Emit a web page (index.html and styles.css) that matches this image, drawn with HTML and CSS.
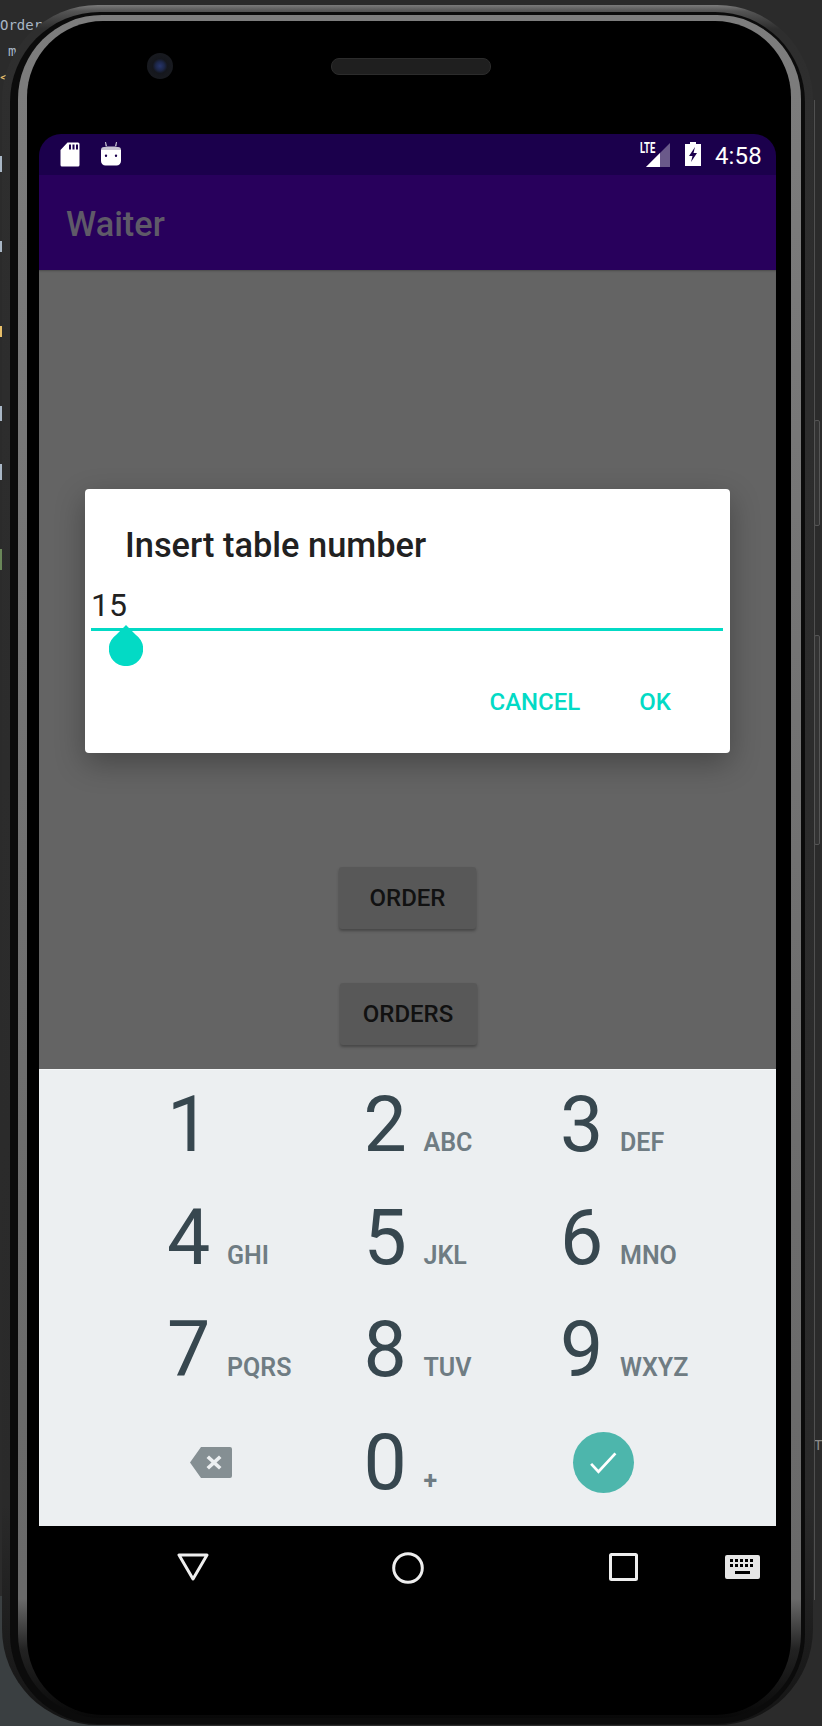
FILE: index.html
```html
<!DOCTYPE html>
<html lang="en">
<head>
    <meta charset="UTF-8">
    <meta name="viewport" content="width=device-width, initial-scale=1.0">
    <title>Waiter</title>
    <link rel="stylesheet" href="styles.css">
</head>
<body>
    <!-- bits of the IDE showing behind the emulator -->
    <div class="ide">
        <span class="code code-1">Order</span>
        <span class="code code-2">m</span>
        <span class="code code-3">&lt;</span>
        <span class="code code-4">T</span>
        <div class="gutter"></div>
        <div class="edge"></div>
        <div class="volume volume-1"></div>
        <div class="volume volume-2"></div>
    </div>

    <div class="phone">
        <div class="bezel">
            <div class="rim">
                <div class="face">
                    <div class="sensors">
                        <div class="camera"></div>
                        <div class="speaker"></div>
                    </div>

                    <div class="screen">
                        <div class="status-bar">
                            <svg class="icon-sd" viewBox="0 0 20 25"><path fill="#fff" fill-rule="evenodd" d="M7.500.5H18a1.500 1.500 0 0 1 1.500 1.500v21a1.500 1.500 0 0 1-1.500 1.500H2A1.500 1.500 0 0 1 .5 23V8zM9 2.500v5h2v-5zm3.500 0v5h2v-5zm3.500 0v5h2v-5z"/></svg>
                            <svg class="icon-android" viewBox="0 0 20 24"><path fill="#c9c5d2" d="M4 0h1l1 4h8l1-4h1l-.6 4.500H4.600z"/><path fill="#c9c5d2" d="M3 5h14a3 3 0 0 1 3 3H0a3 3 0 0 1 3-3z"/><path fill="#fff" fill-rule="evenodd" d="M0 8h20v11a4.500 4.500 0 0 1-4.500 4.500h-11A4.500 4.500 0 0 1 0 19zm5 4.500a1.200 1.200 0 1 0 0 2.400 1.200 1.200 0 0 0 0-2.400zm10 0a1.200 1.200 0 1 0 0 2.400 1.200 1.200 0 0 0 0-2.400z"/></svg>
                            <div class="status-right">
                                <div class="signal">
                                    <span class="lte">LTE</span>
                                    <svg class="icon-signal" viewBox="0 0 24 24"><path fill="#fff" fill-opacity=".35" d="M24 0v24H0z"/><path fill="#fff" d="M14 10v14H0z"/></svg>
                                </div>
                                <svg class="icon-battery" viewBox="0 0 16 24"><path fill="#fff" fill-rule="evenodd" d="M5 0h6v2h5v22H0V2h5zm5 5L4 14h3.500L6 20l6-9H8.500z"/></svg>
                                <span class="clock">4:58</span>
                            </div>
                        </div>

                        <div class="app-bar">Waiter</div>

                        <div class="content">
                            <button class="btn btn-order">ORDER</button>
                            <button class="btn btn-orders">ORDERS</button>

                            <div class="dialog">
                                <div class="dialog-title">Insert table number</div>
                                <div class="dialog-input">15</div>
                                <div class="dialog-line"></div>
                                <div class="handle"></div>
                                <div class="dialog-actions">
                                    <span class="action">CANCEL</span>
                                    <span class="action">OK</span>
                                </div>
                            </div>
                        </div>

                        <div class="keypad">
                            <div class="key"><span class="digit">1</span></div>
                            <div class="key"><span class="digit">2</span><span class="letters">ABC</span></div>
                            <div class="key"><span class="digit">3</span><span class="letters">DEF</span></div>
                            <div class="key"><span class="digit">4</span><span class="letters">GHI</span></div>
                            <div class="key"><span class="digit">5</span><span class="letters">JKL</span></div>
                            <div class="key"><span class="digit">6</span><span class="letters">MNO</span></div>
                            <div class="key"><span class="digit">7</span><span class="letters">PQRS</span></div>
                            <div class="key"><span class="digit">8</span><span class="letters">TUV</span></div>
                            <div class="key"><span class="digit">9</span><span class="letters">WXYZ</span></div>
                            <div class="key key-icon">
                                <svg class="icon-backspace" viewBox="0 0 42 31"><path fill="#858f93" fill-rule="evenodd" d="M11 0h29a2 2 0 0 1 2 2v27a2 2 0 0 1-2 2H11L0 15.500zm8 8.500 -2.500 2.500 5 4.500 -5 4.500 2.500 2.500 5-4.500 5 4.500 2.500-2.500 -5-4.500 5-4.500 -2.500-2.500 -5 4.500z"/></svg>
                            </div>
                            <div class="key"><span class="digit">0</span><span class="letters plus">+</span></div>
                            <div class="key key-icon">
                                <div class="done">
                                    <svg class="icon-check" viewBox="0 0 30 24"><path fill="none" stroke="#fff" stroke-width="3" d="M1.500 13l8 8.500 L28 1.500"/></svg>
                                </div>
                            </div>
                        </div>

                        <div class="nav-bar">
                            <svg class="icon-back" viewBox="0 0 32 28"><path fill="none" stroke="#eee" stroke-width="3" stroke-linejoin="round" d="M2 2h28L16 26z"/></svg>
                            <svg class="icon-home" viewBox="0 0 32 32"><circle cx="16" cy="16" r="14.300" fill="none" stroke="#eee" stroke-width="3"/></svg>
                            <svg class="icon-recent" viewBox="0 0 29 28"><rect x="1.500" y="1.500" width="26" height="25" rx="1" fill="none" stroke="#eee" stroke-width="3"/></svg>
                            <svg class="icon-keyboard" viewBox="0 0 35 24"><path fill="#e6e6e6" fill-rule="evenodd" d="M2 0h31a2 2 0 0 1 2 2v20a2 2 0 0 1-2 2H2a2 2 0 0 1-2-2V2a2 2 0 0 1 2-2zm3 4v3h3V4zm5 0v3h3V4zm5 0v3h3V4zm5 0v3h3V4zm5 0v3h3V4zM5 9v3h3V9zm5 0v3h3V9zm5 0v3h3V9zm5 0v3h3V9zm5 0v3h3V9zM10 16v3h15v-3z"/></svg>
                        </div>
                    </div>
                </div>
            </div>
        </div>
    </div>
</body>
</html>
```

FILE: styles.css
```css
* {
    box-sizing: border-box;
}
html, body {
    margin: 0;
    padding: 0;
    height: 1726px;
    overflow: hidden;
}
body {
    position: relative;
    background: #2b2b2b;
    font-family: Roboto, "Liberation Sans", sans-serif;
}

/* IDE text behind the device */
.ide {
    position: absolute;
    inset: 0;
    background: linear-gradient(#3a3f41, #3a3f41) left bottom / 130px 130px no-repeat;
}
.code {
    position: absolute;
    font-family: "DejaVu Sans Mono", monospace;
    font-size: 14px;
    line-height: 16px;
    color: #a9b7c6;
}
.code-1 { left: 0; top: 17px; }
.code-2 { left: 8px; top: 43px; }
.code-3 { left: 0; top: 69px; color: #e8bf6a; }
.code-4 { left: 814px; top: 1437px; color: #8a8a8a; }
.gutter {
    position: absolute;
    left: 0;
    top: 130px;
    width: 2px;
    height: 530px;
    background: linear-gradient(#2b2b2b 0 5%, #a9b7c6 5% 8%, #2b2b2b 8% 21%, #a9b7c6 21% 23%, #2b2b2b 23% 37%, #e8bf6a 37% 39%, #2b2b2b 39% 52%, #a9b7c6 52% 55%, #2b2b2b 55% 63%, #a9b7c6 63% 66%, #2b2b2b 66% 79%, #6a8759 79% 83%, #2b2b2b 83% 100%);
}
.edge {
    position: absolute;
    left: 814px;
    top: 100px;
    width: 1px;
    height: 1500px;
    background: #505050;
}
.volume {
    position: absolute;
    left: 814px;
    width: 6px;
    border: 1px solid #555;
    border-radius: 2px;
    background: #333;
}
.volume-1 { top: 420px; height: 106px; }
.volume-2 { top: 635px; height: 210px; }

/* device body */
.phone {
    position: relative;
    width: 811px;
    height: 1720px;
    margin: 5px 0 0 2px;
    padding: 7px 8px 0;
    border-radius: 96px;
    background: linear-gradient(#7b7b7b 0, #555 6px, #2e2e2e 24px, #2a2a2a 1500px, #141414 100%);
}
.bezel {
    height: 1712px;
    padding: 3px 4px 0 8px;
    border-radius: 90px;
    background: #0b0b0b;
}
.rim {
    height: 1703px;
    padding: 6px 10px 0 9px;
    border-radius: 84px;
    background: linear-gradient(#7d7d7d 0, #6c6c6c 70%, #6a6a6a 93%, #222 96%, #080808 100%);
}
.face {
    height: 1694px;
    padding: 0 0 0 12px;
    border-radius: 76px;
    background: #000;
}
.sensors {
    display: flex;
    align-items: center;
    height: 113px;
    padding: 32px 0 55px 108px;
}
.camera {
    width: 26px;
    height: 26px;
    border-radius: 50%;
    background: radial-gradient(circle, #27356b 0, #1c2648 24%, #15171d 40%, #1b1d22 100%);
}
.speaker {
    width: 160px;
    height: 17px;
    margin-left: 158px;
    border: 1px solid #2c2c2c;
    border-radius: 8px;
    background: #1f1f1f;
}

/* screen */
.screen {
    display: flex;
    flex-direction: column;
    width: 737px;
    height: 1474px;
    border-radius: 22px 22px 14px 14px;
    overflow: hidden;
    background: #000;
}
.status-bar {
    display: flex;
    align-items: flex-start;
    flex: none;
    height: 41px;
    padding: 8px 14px 0 21px;
    background: #1b004c;
}
.icon-sd {
    width: 20px;
    height: 25px;
}
.icon-android {
    width: 20px;
    height: 24px;
    margin-left: 21px;
}
.status-right {
    display: flex;
    align-items: flex-start;
    margin-left: auto;
}
.signal {
    position: relative;
    width: 30px;
    height: 25px;
}
.lte {
    position: absolute;
    left: 0;
    top: 0;
    font-size: 14px;
    line-height: 12px;
    font-weight: 700;
    color: #fff;
    transform: scaleX(.68);
    transform-origin: left;
}
.icon-signal {
    position: absolute;
    left: 6px;
    top: 1px;
    width: 24px;
    height: 24px;
}
.icon-battery {
    width: 16px;
    height: 24px;
    margin-left: 15px;
}
.clock {
    margin-left: 14px;
    font-size: 24px;
    line-height: 28px;
    color: #fff;
    letter-spacing: .2px;
}
.app-bar {
    flex: none;
    height: 95px;
    padding: 29px 0 0 27px;
    background: #28005c;
    font-size: 34.300px;
    line-height: 40px;
    font-weight: 500;
    color: #5f5a68;
}
.content {
    position: relative;
    flex: none;
    height: 799px;
    display: flex;
    flex-direction: column;
    align-items: center;
    background: #646464;
    box-shadow: inset 0 2px 2px -1px rgba(0, 0, 0, .25);
}
.btn {
    width: 137px;
    height: 62px;
    padding: 0;
    border: none;
    border-radius: 3px;
    background: #585858;
    box-shadow: 0 2px 3px rgba(0, 0, 0, .3);
    font-family: inherit;
    font-size: 24px;
    font-weight: 500;
    color: #111;
}
.btn-order {
    margin-top: 597px;
}
.btn-orders {
    margin: 54px 0 0 1px;
}

/* dialog */
.dialog {
    position: absolute;
    left: 46px;
    top: 219px;
    width: 645px;
    height: 264px;
    padding: 36px 0 0;
    border-radius: 4px;
    background: #fff;
    box-shadow: 0 10px 30px rgba(0, 0, 0, .3);
}
.dialog-title {
    padding-left: 40px;
    font-size: 34.400px;
    line-height: 40px;
    font-weight: 500;
    color: #212121;
}
.dialog-input {
    margin-top: 20px;
    padding-left: 6px;
    font-size: 32px;
    line-height: 40px;
    color: #212121;
}
.dialog-line {
    width: 632px;
    height: 3px;
    margin: 3px 0 0 6px;
    background: #03dac5;
}
.handle {
    position: absolute;
    left: 24px;
    top: 136px;
    width: 34.400px;
    height: 41.200px;
    background: #03dac5;
    clip-path: path("M17 0 L27 10 A17.200 17.200 0 1 1 7 10 Z");
}
.dialog-actions {
    display: flex;
    justify-content: flex-end;
    gap: 59px;
    margin-top: 57px;
    padding-right: 59px;
}
.action {
    font-size: 24px;
    line-height: 28px;
    font-weight: 500;
    color: #03dac5;
}

/* number pad */
.keypad {
    flex: none;
    display: grid;
    grid-template-columns: repeat(3, 196.5px);
    grid-auto-rows: 112.5px;
    height: 457px;
    padding: 0 0 7px 128px;
    background: #eceff1;
    border-top: 1px solid #f5f7f8;
}
.key {
    display: flex;
    align-items: baseline;
    height: 112.5px;
    padding-top: 5px;
}
.digit {
    width: 43px;
    font-size: 77px;
    line-height: 100px;
    color: #37474f;
}
.letters {
    margin-left: 17px;
    font-size: 25px;
    font-weight: 600;
    color: #6f7c83;
}
.plus {
    font-weight: 700;
}
.key-icon {
    align-items: center;
    padding: 0 0 2px;
}
.icon-backspace {
    width: 42px;
    height: 31px;
    margin-left: 23px;
}
.done {
    display: flex;
    align-items: center;
    justify-content: center;
    width: 61px;
    height: 61px;
    margin-left: 13px;
    border-radius: 50%;
    background: #4db6ac;
}
.icon-check {
    width: 29px;
    height: 22px;
}

/* bottom nav */
.nav-bar {
    flex: 1;
    display: flex;
    align-items: flex-start;
    padding: 27px 0 0 138px;
    background: #000;
}
.icon-back {
    width: 32px;
    height: 28px;
}
.icon-home {
    width: 32px;
    height: 32px;
    margin-left: 183px;
    margin-top: -1px;
}
.icon-recent {
    width: 29px;
    height: 28px;
    margin-left: 185px;
}
.icon-keyboard {
    width: 35px;
    height: 24px;
    margin-left: 87px;
    margin-top: 2px;
}
```
